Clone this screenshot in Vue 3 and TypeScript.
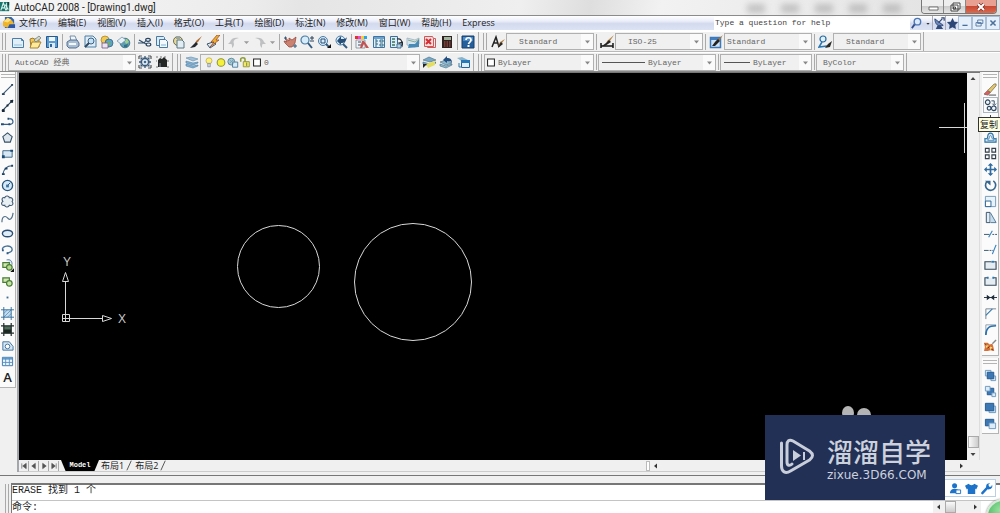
<script setup lang="ts">
import { ref } from 'vue'

interface Tool {
  icon: string
  label: string
}

const icons: Record<string, string> = {
  app: '<path d="M0 1h11v11H0z" fill="#18756e"/><path d="M1 11 4 2l3 9M2 8h4M8 2v9M6 4l4 6" stroke="#d9f2ec" stroke-width="1.3" fill="none"/><path d="M9 1h2v4H9z" fill="#0b3f3c"/>',
  doc: '<path d="M2 1h7l3 3v9H2z" fill="#2f66b8"/><path d="M0 6 5 2l5 3 2 4-6 4-6-2z" fill="#f0b429"/><path d="M5 2l4 2-4 3-4-1z" fill="#ffe07a"/><path d="M7 9h6v4H5z" fill="#2b57a6"/>',
  new: '<path d="M1.500 3.500h9l2 2v7h-11z" fill="#e3eff8" stroke="#4b7ea6"/><path d="M10.500 3.500v2h2" fill="none" stroke="#4b7ea6"/><path d="M3 9h8v2H3z" fill="#bcd6ea"/>',
  open: '<path d="M2 4 5 3l1 1h5v8H3z" fill="#efc75b" stroke="#a27b2a"/><path d="M4 7h9l-3 6H2z" fill="#ffe99a" stroke="#a88430"/><path d="M6 5 11 1l2 2-5 4z" fill="#cfd8d0" stroke="#64746b" stroke-width=".7"/>',
  save: '<path d="M1.500 1.500h11v11h-11z" fill="#5c9bd2" stroke="#235b91"/><path d="M4 2h6v4H4z" fill="#eef6fb"/><path d="M4 8h6v5H4z" fill="#dce9f3"/><path d="M5 9h2v3H5z" fill="#2f6499"/>',
  plot: '<path d="M4 1h5l2 5H5z" fill="#eef5fb" stroke="#5c7897" stroke-width=".8"/><path d="M1 7l3-2h7l2 3v3l-3 2H3l-2-2z" fill="#a8bdd2" stroke="#48688b" stroke-width=".9"/><path d="M3 8h7v2H3z" fill="#f4f8fb"/>',
  preview: '<path d="M2 1h8l3 3v8H2z" fill="#deedf7" stroke="#4b7ea6"/><circle cx="8" cy="6" r="3" fill="#c3e2f5" stroke="#426180"/><path d="M6 8 2 12" stroke="#314964" stroke-width="2"/>',
  publish: '<circle cx="5" cy="5" r="4" fill="#f3ca51" stroke="#a37a20" stroke-width=".7"/><circle cx="9" cy="8" r="4" fill="#5aa1c8" stroke="#285e80" stroke-width=".7"/><path d="M2 8h6v5H2z" fill="#ece3f1" stroke="#6f5684" stroke-width=".8"/><path d="M7 6l4 2-2 3z" fill="#73b15e"/>',
  globe: '<circle cx="8" cy="8" r="4.800" fill="#5f9db4" stroke="#2d6479" stroke-width=".8"/><path d="M7 5l3-1 2 3-3 2z" fill="#9cd187"/><path d="M7 10l4-1-1 3-3 0z" fill="#2f7187"/><path d="M0 6l5-4 4 3-5 4z" fill="#e6f0f7" stroke="#698ca5" stroke-width=".7"/>',
  cut: '<ellipse cx="10" cy="4.800" rx="2.300" ry="1.500" fill="none" stroke="#284461" stroke-width="1.200"/><ellipse cx="10.500" cy="9.500" rx="2.300" ry="1.500" fill="none" stroke="#284461" stroke-width="1.200"/><path d="M8 9 1 5M8 5.500 6 8H0" stroke="#34526e" stroke-width="1.200" fill="none"/>',
  copyclip: '<path d="M1.500 1.500h7l1 1v8h-8z" fill="#dcebf6" stroke="#4a7aa2"/><path d="M4.500 4.500h6l2 2v6h-8z" fill="#f3f9fd" stroke="#4a7aa2"/><path d="M6 9h5v2H6z" fill="#b8d4e9"/>',
  paste: '<circle cx="6" cy="6" r="4.500" fill="#e8d99b" stroke="#656f58"/><path d="M4 1h4v3H4z" fill="#9ba69f"/><path d="M5 5h5l2 2v6H5z" fill="#e1edf3" stroke="#587781"/>',
  match: '<path d="M13 1 9 7 6 9l1-3z" fill="#af6e35"/><path d="M7 7l2 2-3 3-5 1 3-3z" fill="#22282f"/>',
  block: '<path d="M1 9l6-2 3 2-6 4z" fill="#dce8f2" stroke="#3d566e"/><path d="M11 0 5 7h3L4 12l9-7h-3l4-5z" fill="#ecae2e" stroke="#963f20" stroke-width=".7"/>',
  undo: '<path d="M3 7C4 3 8 2 12 3 7 4 6 6 7 9c0 2-1 3-2 4 0-3 0-4-1-4H1z" fill="#bfc0c2"/>',
  redo: '<path d="M11 7C10 3 6 2 2 3c5 1 6 3 5 6 0 2 1 3 2 4 0-3 0-4 1-4h3z" fill="#bfc0c2"/>',
  tri: '<path d="M3 6h8L7 10z" fill="#9b9b9b"/>',
  pan: '<path d="M2 3l4 3V3l3 2 4-3-1 6-3 4H6L2 8l-1-2 3 1z" fill="#cc8271" stroke="#913f35" stroke-width=".7"/><path d="M1 3h3M2.500 1.500v3M10 11h4M12 9v4" stroke="#33597d"/>',
  zoomrt: '<circle cx="5" cy="5" r="4" fill="#d6ecfa" stroke="#4a7ba2" stroke-width="1.200"/><path d="M8 8l4 5" stroke="#325b82" stroke-width="2"/><path d="M10 3h4M12 1v4M10 6h4" stroke="#2e435a" fill="none"/>',
  zoomwin: '<circle cx="6" cy="6" r="4.500" fill="#d6ecfa" stroke="#4a7ba2"/><path d="M4 4h4v4H4z" fill="none" stroke="#284b70"/><path d="M9 9l3 3" stroke="#325b82" stroke-width="2"/><path d="M10 13h4v-4z" fill="#111"/>',
  zoomprev: '<circle cx="6.500" cy="5.500" r="4.500" fill="#d6ecfa" stroke="#4a7ba2"/><path d="M9 9l4 4" stroke="#325b82" stroke-width="2"/><path d="M3 6l4-5v3c3 0 5 0 6-2-1 5-3 6-6 6v2z" fill="#274e77"/>',
  props: '<path d="M0 1h3v3H0z" fill="#e62f2f"/><path d="M3 1h3v3H3z" fill="#ef45d3"/><path d="M6 1h3v3H6z" fill="#f3d321"/><path d="M9 1h3v3H9z" fill="#28a5e6"/><path d="M1 5h9v8H1z" fill="#eef3f7" stroke="#6c7b88" stroke-width=".7"/><path d="M3 7h3M3 10h3" stroke="#3c4d5f"/><path d="M7 6l2 0 3 4 2 3h-3L9 9l-2 4H5z" fill="#c55252"/>',
  design: '<path d="M1.500 1.500h11v11h-11z" fill="#e2eff8" stroke="#3d74a3"/><path d="M2 2h10v2H2z" fill="#6ba3d0"/><path d="M4 4v8M4 6h2M4 9h2M8 5h3v2H8zM8 9h3v2H8z" fill="none" stroke="#336a86"/>',
  palette: '<path d="M1.500 1.500h7v11h-7z" fill="#dcebf6" stroke="#3d6e99"/><path d="M3 4h3M3 7h3M3 10h3" stroke="#397458" stroke-width="1.500"/><path d="M8 4c4-1 5 2 5 5M10 8l3 3 1-4z" fill="none" stroke="#222d38" stroke-width="1.200"/><path d="M8 9h4v4H8z" fill="#b9d3e6" stroke="#47708f"/>',
  sheet: '<path d="M1 3l8 2 4-2v6l-4 3-8-2z" fill="#d4e5ef" stroke="#91a7b6" stroke-width=".7"/><path d="M3 9l6 0 4-5v8l-11 1z" fill="#478ab6"/><path d="M2 5l7 2 4-3" stroke="#86a98f" fill="none"/>',
  markup: '<path d="M1.500 1.500h8l1 2v8h-9z" fill="#f9dcdc" stroke="#cd5757"/><path d="M4.500 11.500v1h8v-9h-2" fill="none" stroke="#d35858"/><path d="M3 4l5 5M8 4 3 9" stroke="#d62d35" stroke-width="2"/>',
  calc: '<path d="M2 1h10v12H2z" fill="#2f211f"/><path d="M4 2h7v3H4z" fill="#9eb49c"/><path d="M4 7h7M4 9h7M4 11h7" stroke="#bd594f" stroke-width="1.200" stroke-dasharray="1.500 1"/>',
  help: '<path d="M1 1h12v12H1z" fill="#245e9b" stroke="#163f6c"/><path d="M2 2h10v4H2z" fill="#4b8bc5"/><path d="M5 5c0-3 5-3 5 0 0 2-2 2-2.500 4" stroke="#fff" stroke-width="1.700" fill="none"/><path d="M6.500 10h2v2h-2z" fill="#fff"/>',
  textstyle: '<path d="M1 12 5 2l3 10M2 8h5" fill="none" stroke="#222" stroke-width="1.500"/><path d="M14 4l-3 4-4 3 2-4z" fill="#b68145"/><path d="M10 7l2 2-5 4 1-3z" fill="#262626"/>',
  dimstyle: '<path d="M1 8v5M13 8v5M1 11h12" fill="none" stroke="#161616" stroke-width="1.500"/><path d="M14 0l-4 6-4 4 1-4z" fill="#b98b4e"/><path d="M9 5l2 2-6 4H2l4-3z" fill="#252525"/>',
  tablestyle: '<path d="M1.500 2.500h10v10h-10z" fill="#cfe2f4" stroke="#3e78b7" stroke-width="1.500"/><path d="M2 3h9v2H2z" fill="#3f80c5"/><path d="M14 0l-4 6-5 4 2-4z" fill="#aa753a"/><path d="M9 4l2 2-5 5H3l3-4z" fill="#222"/>',
  leader: '<circle cx="5" cy="4" r="3" fill="#dff0fa" stroke="#276aa0" stroke-width="1.200"/><path d="M4 7 1 12l8-1" stroke="#2c77b3" stroke-width="1.500" fill="none"/><path d="M14 6l-4 3-3 4 5-1z" fill="#2a2a26"/>',
  gear: '<path d="M1 1h3M10 1h3M1 13h3M10 13h3M1 1v3M13 1v3M1 10v3M13 10v3" stroke="#555" stroke-width="1.200"/><path d="M2 2h10v10H2z" fill="#aebccc"/><circle cx="7" cy="7" r="3.500" fill="#e6eff7" stroke="#3a5875" stroke-width="1.300"/><circle cx="7" cy="7" r="1.300" fill="#3e6b96"/><path d="M7 1v2M7 11v2M1 7h2M11 7h2M3 3l1 1M10 10l1 1M11 3l-1 1M4 10l-1 1" stroke="#3a5875" stroke-width="1.300"/>',
  workspace: '<path d="M1 2h2M5 2h2M9 2h2M1 12h2M12 12h2M1 6h1M12 6h2" stroke="#777"/><path d="M3 5l2-2 2 1 2-2 3 3v7H3z" fill="#242626"/><path d="M4 8h2v4H4z" fill="#555b60"/>',
  layers: '<path d="M1 3l5-1 7 2-5 2z" fill="#9fc0d8" stroke="#6f97b3" stroke-width=".7"/><path d="M1 6l7 2 5-1v1L8 10 1 8zM1 9l7 2 5-1v1l-5 2-7-2z" fill="#82b0d0" stroke="#4c81a8" stroke-width=".6"/>',
  bulb: '<circle cx="7" cy="5" r="3.500" fill="#fff279" stroke="#b5a14a" stroke-width=".8"/><path d="M5.500 8h3v4h-3z" fill="#ccd7e2" stroke="#6b7b8e" stroke-width=".7"/>',
  sun: '<circle cx="7" cy="7" r="4.500" fill="#f5f13b" stroke="#8c9137" stroke-width="1.200"/>',
  freeze: '<circle cx="5" cy="6" r="4" fill="#a8cad5" stroke="#517f92"/><path d="M6.500 6.500h6v6h-6z" fill="#d8ebf5" stroke="#417293"/><path d="M3 4l5 4M8 3 3 8" stroke="#759daf"/>',
  lock: '<path d="M2 6V3c0-2 5-2 5 0v3" fill="none" stroke="#8d9b35" stroke-width="1.800"/><path d="M5 6h7v6H5z" fill="#f2e86f" stroke="#8d8c30"/><path d="M9 7v4" stroke="#647b2b"/>',
  square: '<path d="M3 3h8v8H3z" fill="#fff" stroke="#222" stroke-width="1.200"/>',
  layercur: '<path d="M1 5l6-3 7 3-6 2zM1 7l7 2 6-2v1l-6 3-7-2z" fill="#79a8c4" stroke="#426c84" stroke-width=".6"/><path d="M4 9l9-3v4l-7 3z" fill="#e3dd60"/><path d="M1 13V9h4z" fill="#222"/>',
  layerprev: '<path d="M1 7l6-2 6 3-6 2zM1 9l6 2 6-2v1l-6 3-6-2z" fill="#8db8cd" stroke="#426c84" stroke-width=".6"/><path d="M4 5l4-4v2c3 0 5 1 5 5-1-2-2-2-5-2v2z" fill="#234e80"/>',
  layerstate: '<path d="M1 3l5-1 6 3-5 2z" fill="#89b4cd"/><path d="M5.500 5.500h8v7h-8z" fill="#deedf7" stroke="#236499"/><path d="M5 5h9v3H5z" fill="#2779b8"/><path d="M3 8v4h2" stroke="#3978a4" fill="none"/>',
  line: '<path d="M2 12 12 2" stroke="#3a5878" stroke-width="1.200"/><path d="M1 11h3v2H1zM11 1h2v2h-2z" fill="#29445e"/>',
  xline: '<path d="M1 13 13 1" stroke="#29445e" stroke-width="1.300"/><path d="M1 11h3v3H1zM10 1h3v3h-3zM6 6h2v2H6z" fill="#142638"/>',
  pline: '<path d="M2 10h8c4 0 4-6-1-6" stroke="#38618a" stroke-width="1.300" fill="none"/><path d="M0 9h3v2H0zM8 9h2v2H8zM7 3h2v2H7z" fill="#204d78"/>',
  polygon: '<path d="M7 2l5 4-2 6H4L2 6z" fill="#dce6ec" stroke="#354f66" stroke-width="1.200"/>',
  rect: '<path d="M2 4h10v7H2z" fill="#d7e7f3" stroke="#386386"/><path d="M1 9h3v3H1zM10 3h3v2h-3z" fill="#194a75"/>',
  arc: '<path d="M2 12C3 7 6 3 12 3" stroke="#315779" stroke-width="1.200" fill="none"/><path d="M1 11h3v2H1zM4 5h3v2H4zM11 2h2v2h-2z" fill="#1e4162"/>',
  circle: '<circle cx="7" cy="7" r="5.500" fill="#d5e9f7" stroke="#28577e" stroke-width="1.400"/><path d="M7 7l3-3" stroke="#204d72"/><path d="M5.500 6h3v3h-3z" fill="#3975a4"/>',
  cloud: '<path d="M4 3c1-3 5-2 5 0 4-1 4 3 3 4 2 3 0 5-3 4-1 3-5 2-5 0-4 1-4-3-2-4-2-3 0-5 2-4z" fill="#e9f0f4" stroke="#435b75" stroke-width="1.200"/>',
  spline: '<path d="M1 12C1 5 5 5 7 7.500s5 2 6-5.500" stroke="#526f89" stroke-width="1.300" fill="none"/>',
  ellipse: '<ellipse cx="7" cy="7" rx="5.500" ry="3.500" fill="#deedf7" stroke="#294d76" stroke-width="1.500"/>',
  ellarc: '<path d="M2 8C-1 3 12 1 12 7c0 3-3 3-5 4" fill="none" stroke="#4a7497" stroke-width="1.500"/><path d="M6 10h2v2H6zM1 7h2v2H1z" fill="#2c5a84"/>',
  insert: '<path d="M6 1c4-1 6 1 6 5" stroke="#547ea8" fill="#d9e9f4"/><path d="M2 4h7v5H2z" fill="#d2e6b2" stroke="#477d36" stroke-width="1.300"/><circle cx="9" cy="9" r="3" fill="#b9da8e" stroke="#477d36" stroke-width="1.300"/><path d="M10 14h4v-4z" fill="#111"/>',
  makeblock: '<path d="M2 3h7v5H2z" fill="#d2e6b2" stroke="#477d36" stroke-width="1.300"/><circle cx="9" cy="9" r="3" fill="#c6e3a3" stroke="#477d36" stroke-width="1.300"/>',
  point: '<path d="M6 6h2v2H6z" fill="#416b91"/>',
  hatch: '<path d="M3 3h8v8H3z" fill="#c4def0"/><path d="M3 7l4-4M3 11l8-8M7 11l4-4" stroke="#679ac1"/><path d="M0 3h14M3 0v14M11 0v14M0 11h14" stroke="#356d9b" fill="none"/>',
  gradient: '<path d="M3 3h8v8H3z" fill="#506c5b"/><path d="M3 7h8v4H3z" fill="#1b2520"/><path d="M0 3h14M3 0v14M11 0v14M0 11h14" stroke="#222d2b" stroke-width="1.300" fill="none"/>',
  region: '<path d="M2 3h7l4 5v4H2z" fill="#d6e7f4" stroke="#3d719e"/><circle cx="7" cy="8" r="2.500" fill="#fff" stroke="#3d719e"/>',
  table: '<path d="M1.500 2.500h11v9h-11z" fill="#eef6fb" stroke="#3975ac"/><path d="M2 3h10v2H2z" fill="#609cce"/><path d="M5 3v8M9 3v8M2 8h10" stroke="#5992c6"/>',
  erase: '<path d="M0 12l4-4 3 2-3 3z" fill="#d65f60" stroke="#7f3f3c" stroke-width=".7"/><path d="M4 8l7-7h2v2l-6 7z" fill="#e4c66a" stroke="#71674e" stroke-width=".8"/><path d="M5 13h8" stroke="#444"/>',
  copy: '<circle cx="4" cy="3.500" r="2.500" fill="#eef4f8" stroke="#2d4660" stroke-width="1.200"/><circle cx="5.500" cy="10" r="2" fill="#eef4f8" stroke="#2d4660" stroke-width="1.200"/><circle cx="10.500" cy="10" r="2.500" fill="#eef4f8" stroke="#2d4660" stroke-width="1.200"/><path d="M8 2h3v4M9 5l2 2 2-2" fill="none" stroke="#2d4660"/>',
  mirror: '<path d="M5 3v9H1zM9 3v9h4z" fill="#d3e5f2" stroke="#3b6285"/><path d="M7 0v13" stroke="#333"/>',
  offset: '<path d="M1 12h12V8c-3 1-3-1-3-2 0-5-6-5-6 0 0 1 0 3-3 2z" fill="#d4e8f7" stroke="#2c6f9f" stroke-width="1.200"/><path d="M4 10h7V9C7 9 9 5 7 5S7 9 4 9z" fill="#fff" stroke="#4b87b3"/>',
  array: '<path d="M1.500 1.500h4v4h-4zM8.500 1.500h4v4h-4zM1.500 8.500h4v4h-4zM8.500 8.500h4v4h-4z" fill="#f6f7f8" stroke="#333e49" stroke-width="1.200"/>',
  move: '<path d="M7 1v12M1 7h12" stroke="#326b9d" stroke-width="1.800"/><path d="M7 0l3 3H4zM7 14l3-3H4zM0 7l3-3v6zM14 7l-3-3v6z" fill="#326b9d"/>',
  rotate: '<path d="M3 3a5.500 5.500 0 1 0 7-1" fill="none" stroke="#376790" stroke-width="1.800"/><path d="M1 2h6v5z" fill="#376790"/>',
  scale: '<path d="M1.500 1.500h11v11h-11z" fill="#e8f2f8" stroke="#7098b8"/><path d="M1.500 6.500h6v6h-6z" fill="#fff" stroke="#235f91"/>',
  stretch: '<path d="M2.500 1.500h4v11h-4z" fill="#e3edf4" stroke="#344e68"/><path d="M7 2l6 10.500H7" fill="#c5dded" stroke="#4d7797"/>',
  trim: '<path d="M0 8h6M9 8h2M12 8h2" stroke="#33536e"/><path d="M5 11l4-7" stroke="#3d84bc" stroke-width="1.200"/>',
  extend: '<path d="M0 8h5M6 8h2M9 8h1" stroke="#33536e"/><path d="M9 12l4-10" stroke="#3d84bc" stroke-width="1.300"/>',
  breakpt: '<path d="M8 3H1v8h12V3h-2" fill="#e5edf2" stroke="#354757" stroke-width="1.200"/><path d="M8 2h3v2H8z" fill="#2c79b3"/>',
  break: '<path d="M4 3H1v8h12V3h-3" fill="#e5edf2" stroke="#354757" stroke-width="1.200"/><path d="M3 2h2v2H3zM9 2h2v2H9z" fill="#2c79b3"/>',
  join: '<path d="M0 7h14" stroke="#1f2d3b"/><path d="M3 4l4 3-4 3zM11 4 7 7l4 3z" fill="#1f2d3b"/>',
  chamfer: '<path d="M2 13V2h11" fill="none" stroke="#74818e"/><path d="M2 9l7-7" stroke="#347aaf" stroke-width="1.200"/>',
  fillet: '<path d="M2 13V2h11" fill="none" stroke="#8a99a7"/><path d="M2 13C2 6 5 3 13 3" fill="none" stroke="#2b72ad" stroke-width="1.800"/>',
  explode: '<path d="M0 4h4l2 2 3-1 1 3 1 5-4-1-3 1H0l1-4z" fill="#d4703a"/><path d="M2 6l3 1-3 3zM6 8l3 1-2 3z" fill="#f8dc70"/><path d="M1 5l2 2M8 11l2 1M4 10l2-2" stroke="#7a2b17"/><path d="M9 5l4-4" stroke="#888" stroke-width="1.500"/>',
  front: '<path d="M1.500 1.500h6v6h-6zM7.500 7.500h5v5h-5z" fill="#dcebf7" stroke="#6c98be"/><path d="M3.500 3.500h7v7h-7z" fill="#3d78b4" stroke="#22588e"/>',
  back: '<path d="M3.500 3.500h7v7h-7z" fill="#3d78b4" stroke="#22588e"/><path d="M1.500 1.500h5v5h-5zM8.500 8.500h4v4h-4z" fill="#dcebf7" stroke="#6c98be"/>',
  above: '<path d="M5.500 5.500h7v7h-7z" fill="#c6dff2" stroke="#6c98be"/><path d="M1.500 2.500h9v8h-9z" fill="#3d78b4" stroke="#22588e"/>',
  under: '<path d="M1.500 2.500h9v7h-9z" fill="#3d78b4" stroke="#22588e"/><path d="M5.500 6.500h7v6h-7z" fill="#dcebf7" stroke="#6c98be"/>',
  find: '<circle cx="8" cy="5" r="3.500" fill="#dceafb" stroke="#4d76b5" stroke-width="1.500"/><path d="M5 8l-3 4" stroke="#334f8c" stroke-width="2"/>',
  comm: '<path d="M2 2c0 6 4 9 9 7z" fill="#6f88b8" stroke="#2d4677"/><path d="M6 6l4-4M9 1h3v3" stroke="#2d4677" stroke-width="1.300" fill="none"/><path d="M3 13h8l-3-4H5z" fill="#354d7c"/>',
  star: '<path d="M7 1l2 4 4 .5-3 3 .7 4.500L7 11l-3.700 2 .7-4.500-3-3L5 5z" fill="#2c4775"/>',
  minimize: '<path d="M4 9h6v1.500H4z" fill="#4b6f9b"/>',
  restore: '<path d="M5.500 3.500h6v4h-6zM3.500 6.500h6v4h-6z" fill="#e7f2fd" stroke="#4b6f9b"/>',
  close: '<path d="M4 4l6 6M10 4l-6 6" stroke="#4b6f9b" stroke-width="1.800"/>',
}

const standardGroups: Tool[][] = [
  [
    { icon: 'new', label: '新建' },
    { icon: 'open', label: '打开' },
    { icon: 'save', label: '保存' },
  ],
  [
    { icon: 'plot', label: '打印' },
    { icon: 'preview', label: '打印预览' },
    { icon: 'publish', label: '发布' },
    { icon: 'globe', label: '三维 DWF' },
  ],
  [
    { icon: 'cut', label: '剪切' },
    { icon: 'copyclip', label: '复制到剪贴板' },
    { icon: 'paste', label: '粘贴' },
    { icon: 'match', label: '特性匹配' },
    { icon: 'block', label: '块编辑器' },
  ],
  [
    { icon: 'undo', label: '放弃' },
    { icon: 'tri', label: '放弃列表' },
    { icon: 'redo', label: '重做' },
    { icon: 'tri', label: '重做列表' },
  ],
  [
    { icon: 'pan', label: '实时平移' },
    { icon: 'zoomrt', label: '实时缩放' },
    { icon: 'zoomwin', label: '窗口缩放' },
    { icon: 'zoomprev', label: '缩放上一个' },
  ],
  [
    { icon: 'props', label: '特性' },
    { icon: 'design', label: '设计中心' },
    { icon: 'palette', label: '工具选项板' },
    { icon: 'sheet', label: '图纸集管理器' },
    { icon: 'markup', label: '标记集管理器' },
    { icon: 'calc', label: '快速计算器' },
  ],
  [{ icon: 'help', label: '帮助' }],
]

const styleCombos = [
  { icon: 'textstyle', label: '文字样式', value: 'Standard', indent: 'wide' },
  { icon: 'dimstyle', label: '标注样式', value: 'ISO-25', indent: 'wide' },
  { icon: 'tablestyle', label: '表格样式', value: 'Standard', indent: 'narrow' },
  { icon: 'leader', label: '多重引线样式', value: 'Standard', indent: 'wide' },
]

const menus = ['文件(F)', '编辑(E)', '视图(V)', '插入(I)', '格式(O)', '工具(T)', '绘图(D)', '标注(N)', '修改(M)', '窗口(W)', '帮助(H)', 'Express']

const toTools = (pairs: [string, string][]): Tool[] => pairs.map(([icon, label]) => ({ icon, label }))

const drawTools = toTools([
  ['line', '直线'], ['xline', '构造线'], ['pline', '多段线'], ['polygon', '正多边形'], ['rect', '矩形'],
  ['arc', '圆弧'], ['circle', '圆'], ['cloud', '修订云线'], ['spline', '样条曲线'], ['ellipse', '椭圆'],
  ['ellarc', '椭圆弧'], ['insert', '插入块'], ['makeblock', '创建块'], ['point', '点'], ['hatch', '图案填充'],
  ['gradient', '渐变色'], ['region', '面域'], ['table', '表格'], ['letter', '多行文字'],
])

const modifyTools = toTools([
  ['erase', '删除'], ['copy', '复制'], ['mirror', '镜像'], ['offset', '偏移'], ['array', '阵列'],
  ['move', '移动'], ['rotate', '旋转'], ['scale', '缩放'], ['stretch', '拉伸'], ['trim', '修剪'],
  ['extend', '延伸'], ['breakpt', '打断于点'], ['break', '打断'], ['join', '合并'], ['chamfer', '倒角'],
  ['fillet', '圆角'], ['explode', '分解'],
])

const orderTools = toTools([
  ['front', '前置'], ['back', '后置'], ['above', '置于对象之上'], ['under', '置于对象之下'],
])

const layerStates = ['bulb', 'sun', 'freeze', 'lock', 'square']
const question = ref('Type a question for help')
const command = ref('命令:')
const activeTab = ref('Model')
const navArrows = [
  { label: '第一个', d: 'M2 1v6M7 1v6L3 4z' },
  { label: '上一个', d: 'M6 1v6L2 4z' },
  { label: '下一个', d: 'M3 1v6l4-3z' },
  { label: '最后一个', d: 'M7 1v6M2 1v6l4-3z' },
]
</script>

<template>
  <div class="window">
    <header class="titlebar">
      <svg class="logo" viewBox="0 0 12 14" v-html="icons.app"></svg>
      <h1>AutoCAD 2008 - [Drawing1.dwg]</h1>
      <div class="glass" aria-hidden="true"><i v-for="n in 5" :key="n"></i></div>
      <div class="winbtns">
        <button aria-label="最小化"><svg viewBox="0 0 20 12"><path d="M6 6h9v3H6z" fill="#fff" stroke="#555" stroke-width=".8" /></svg></button>
        <button aria-label="还原"><svg viewBox="0 0 20 12"><path d="M8 2h7v6H8zM6 4h7v6H6z" fill="#fff" stroke="#444" /><path d="M8.500 6h2v2h-2z" fill="none" stroke="#444" /></svg></button>
        <button class="close" aria-label="关闭"><svg viewBox="0 0 20 12"><path d="M7 3l6 6M13 3l-6 6" stroke="#7a3128" stroke-width="3.500" /><path d="M7 3l6 6M13 3l-6 6" stroke="#fff" stroke-width="2" /></svg></button>
      </div>
    </header>

    <div class="menubar">
      <svg class="docicon" viewBox="0 0 14 14" v-html="icons.doc"></svg>
      <nav>
        <button v-for="m in menus" :key="m">{{ m }}</button>
      </nav>
      <input v-model="question" class="ask" type="text" aria-label="帮助问题" />
      <button class="info" aria-label="搜索"><svg viewBox="0 0 14 14" v-html="icons.find"></svg></button>
      <button class="info slim" aria-label="搜索选项"><svg viewBox="0 0 14 14"><path d="M4 6h6L7 9z" fill="#333" /></svg></button>
      <button class="info boxed" aria-label="通讯中心"><svg viewBox="0 0 14 14" v-html="icons.comm"></svg></button>
      <button class="info boxed" aria-label="收藏夹"><svg viewBox="0 0 14 14" v-html="icons.star"></svg></button>
      <button class="info mdi" aria-label="最小化图形"><svg viewBox="0 0 14 14" v-html="icons.minimize"></svg></button>
      <button class="info mdi" aria-label="还原图形"><svg viewBox="0 0 14 14" v-html="icons.restore"></svg></button>
      <button class="info mdi" aria-label="关闭图形"><svg viewBox="0 0 14 14" v-html="icons.close"></svg></button>
    </div>

    <div class="toolrow">
      <div class="bar">
        <span class="grip"></span>
        <template v-for="(group, gi) in standardGroups" :key="gi">
          <span v-if="gi" class="sep"></span>
          <button v-for="(t, ti) in group" :key="ti" class="tool" :class="{ drop: t.icon === 'tri' }" :aria-label="t.label">
            <svg viewBox="0 0 14 14" v-html="icons[t.icon]"></svg>
          </button>
        </template>
      </div>
      <div class="bar styles">
        <span class="grip"></span>
        <template v-for="(c, ci) in styleCombos" :key="c.label">
          <span v-if="ci" class="sep"></span>
          <button class="tool" :aria-label="c.label"><svg viewBox="0 0 14 14" v-html="icons[c.icon]"></svg></button>
          <span class="combo style" :class="c.indent">
            <select :aria-label="c.label"><option>{{ c.value }}</option></select>
            <svg class="arrow" viewBox="0 0 12 14"><path d="M4 6h5L6.500 9z" fill="#888" /></svg>
          </span>
        </template>
      </div>
    </div>

    <div class="toolrow second">
      <div class="bar workspaces">
        <span class="grip"></span>
        <span class="combo ws">
          <select aria-label="工作空间"><option>AutoCAD 经典</option></select>
          <svg class="arrow" viewBox="0 0 12 14"><path d="M4 6h5L6.500 9z" fill="#888" /></svg>
        </span>
        <button class="tool" aria-label="工作空间设置"><svg viewBox="0 0 14 14" v-html="icons.gear"></svg></button>
        <button class="tool" aria-label="我的工作空间"><svg viewBox="0 0 14 14" v-html="icons.workspace"></svg></button>
      </div>
      <div class="bar layerbar">
        <span class="grip"></span>
        <button class="tool" aria-label="图层特性管理器"><svg viewBox="0 0 14 14" v-html="icons.layers"></svg></button>
        <span class="combo layer">
          <svg v-for="s in layerStates" :key="s" class="state" viewBox="0 0 14 14" v-html="icons[s]"></svg>
          <select aria-label="图层"><option>0</option></select>
          <svg class="arrow" viewBox="0 0 12 14"><path d="M4 6h5L6.500 9z" fill="#888" /></svg>
        </span>
        <button class="tool" aria-label="置为当前图层"><svg viewBox="0 0 14 14" v-html="icons.layercur"></svg></button>
        <button class="tool" aria-label="上一个图层"><svg viewBox="0 0 14 14" v-html="icons.layerprev"></svg></button>
        <button class="tool" aria-label="图层状态"><svg viewBox="0 0 14 14" v-html="icons.layerstate"></svg></button>
      </div>
      <div class="bar propbar">
        <span class="grip"></span>
        <span class="combo color">
          <svg class="state" viewBox="0 0 14 14" v-html="icons.square"></svg>
          <select aria-label="颜色"><option>ByLayer</option></select>
          <svg class="arrow" viewBox="0 0 12 14"><path d="M4 6h5L6.500 9z" fill="#888" /></svg>
        </span>
        <span class="sep"></span>
        <span class="combo ltype">
          <i class="sample"></i>
          <select aria-label="线型"><option>ByLayer</option></select>
          <svg class="arrow" viewBox="0 0 12 14"><path d="M4 6h5L6.500 9z" fill="#888" /></svg>
        </span>
        <span class="sep"></span>
        <span class="combo lweight">
          <i class="sample"></i>
          <select aria-label="线宽"><option>ByLayer</option></select>
          <svg class="arrow" viewBox="0 0 12 14"><path d="M4 6h5L6.500 9z" fill="#888" /></svg>
        </span>
        <span class="sep"></span>
        <span class="combo plot">
          <select aria-label="打印样式"><option>ByColor</option></select>
          <svg class="arrow" viewBox="0 0 12 14"><path d="M4 6h5L6.500 9z" fill="#888" /></svg>
        </span>
      </div>
    </div>

    <main class="work">
      <aside class="side left">
        <div class="dock">
          <span class="vgrip"></span>
          <button v-for="t in drawTools" :key="t.label" class="vtool" :aria-label="t.label">
            <b v-if="t.icon === 'letter'">A</b>
            <svg v-else viewBox="0 0 14 14" v-html="icons[t.icon]"></svg>
          </button>
        </div>
      </aside>

      <section class="document">
        <div class="viewrow">
          <svg class="canvas" role="img" aria-label="模型空间">
            <g fill="none" stroke="#d8d8d8">
              <circle cx="259.500" cy="193.500" r="41" />
              <circle cx="394" cy="209" r="58.500" />
              <path d="M43.500 241.500h7v7h-7zM43.500 245.500h40M46.500 249v-41M43.500 208.500h6l-3-9zM83.500 242.500v6l9-3z" />
              <path d="M920 54.500h28M945.500 30v50" />
            </g>
            <text x="44" y="193">Y</text>
            <text x="99" y="250">X</text>
            <ellipse cx="829" cy="340" rx="6" ry="7" fill="#b5b5b5" />
            <ellipse cx="845" cy="342" rx="7" ry="7" fill="#b5b5b5" />
          </svg>
          <div class="vscroll">
            <button aria-label="向上滚动"><svg viewBox="0 0 12 12"><path d="M3.500 7h5L6 4z" fill="#444" /></svg></button>
            <span class="vthumb"></span>
            <button aria-label="向下滚动"><svg viewBox="0 0 12 12"><path d="M3.500 5h5L6 8z" fill="#444" /></svg></button>
          </div>
        </div>
        <div class="tabrow">
          <button v-for="a in navArrows" :key="a.label" class="nav" :aria-label="a.label">
            <svg viewBox="0 0 9 8"><path :d="a.d" fill="#555" stroke="#555" stroke-width=".7" /></svg>
          </button>
          <button class="tab model" :class="{ active: activeTab === 'Model' }" @click="activeTab = 'Model'">Model</button>
          <button class="tab" @click="activeTab = '布局1'">布局1</button>
          <svg class="slash" viewBox="0 0 8 11"><path d="M1 11 6 0" stroke="#444" /></svg>
          <button class="tab" @click="activeTab = '布局2'">布局2</button>
          <svg class="slash" viewBox="0 0 8 11"><path d="M1 11 6 0" stroke="#444" /></svg>
          <div class="hscroll">
            <span class="split"></span>
            <button aria-label="向左滚动"><svg viewBox="0 0 12 12"><path d="M7 3.500v5L4 6z" fill="#333" /></svg></button>
            <span class="fill"></span>
            <button aria-label="向右滚动"><svg viewBox="0 0 12 12"><path d="M5 3.500v5L8 6z" fill="#333" /></svg></button>
          </div>
        </div>
      </section>

      <aside class="side right">
        <div class="dock">
          <span class="vgrip"></span>
          <button v-for="t in modifyTools" :key="t.label" class="vtool" :class="{ hover: t.icon === 'copy' }" :aria-label="t.label">
            <svg viewBox="0 0 14 14" v-html="icons[t.icon]"></svg>
            <span v-if="t.icon === 'copy'" class="tip" role="tooltip">复制</span>
          </button>
        </div>
        <div class="dock order">
          <span class="vgrip"></span>
          <button v-for="t in orderTools" :key="t.label" class="vtool" :aria-label="t.label">
            <svg viewBox="0 0 14 14" v-html="icons[t.icon]"></svg>
          </button>
        </div>
      </aside>
    </main>

    <footer class="command">
      <span class="grip"></span>
      <div class="console">
        <p class="history">ERASE 找到 1 个</p>
        <div class="promptrow">
          <input v-model="command" type="text" aria-label="命令行" />
          <div class="cscroll">
            <button aria-label="向左"><svg viewBox="0 0 12 12"><path d="M7 3.500v5L4 6z" fill="#333" /></svg></button>
            <span class="cthumb"></span>
            <span class="fill"></span>
            <button aria-label="向右"><svg viewBox="0 0 12 12"><path d="M5 3.500v5L8 6z" fill="#333" /></svg></button>
          </div>
        </div>
      </div>
    </footer>

    <div class="brand">
      <svg class="play" viewBox="0 0 36 38">
        <path d="M2.500 6v23c0 6 4 8 9 5l19-11c4-3 4-6 0-9L14 4C10 2 8 4 8 8v17c0 4 3 4 5 2" fill="none" stroke="#c9cedb" stroke-width="3" stroke-linecap="round" stroke-linejoin="round" />
        <path d="M14 13v11l8-5.500zM24 15h2v8h-2z" fill="#c9cedb" />
      </svg>
      <div>
        <strong>溜溜自学</strong>
        <span>zixue.3D66.COM</span>
      </div>
    </div>

    <div class="tray">
      <button aria-label="账户"><svg viewBox="0 0 14 14"><circle cx="6" cy="4" r="2.700" fill="#1c73c9" /><path d="M1 12c0-6 9-6 10-2v2z" fill="#1c73c9" /><path d="M7.500 8.500h5v4h-5z" fill="#fff" stroke="#1c73c9" /></svg></button>
      <button aria-label="皮肤"><svg viewBox="0 0 14 14"><path d="M4 2c1 2 5 2 6 0l4 2-2 4-1-1v6H3V7L2 8 0 4z" fill="#1c73c9" /></svg></button>
      <button aria-label="设置"><svg viewBox="0 0 14 14"><path d="M2.500 12 8 6" stroke="#1c73c9" stroke-width="2.600" stroke-linecap="round" /><path d="M11 1 9 3l1 2 2 0 1-2c1 3-1 5-4 5S6 3 8 2z" fill="#1c73c9" /></svg></button>
    </div>
    <div class="orb" aria-hidden="true"></div>
  </div>
</template>

<style>
html,
body {
  height: 100%;
  margin: 0;
  overflow: hidden;
}

#app {
  height: 100%;
}
</style>

<style scoped>
.window {
  position: relative;
  display: flex;
  flex-direction: column;
  height: 100%;
  overflow: hidden;
  background: #f0f0f0;
  color: #333;
  font: 9px/14px "Open Sans", "Noto Sans CJK SC", sans-serif;
}

button {
  display: flex;
  flex: none;
  align-items: center;
  justify-content: center;
  margin: 0;
  padding: 0;
  border: 0;
  background: none;
  color: inherit;
  font: inherit;
}

svg {
  display: block;
  flex: none;
}

.titlebar {
  display: flex;
  flex: none;
  height: 15px;
  background: linear-gradient(100deg, #f6f6f6 0%, #ececec 25%, #e5e5e5 30%, #efefef 52%, #dedede 59%, #f2f2f2 66%, #e0e0e0 100%);
}

.logo {
  width: 10px;
  height: 14px;
}

h1 {
  flex: 1;
  margin: 0 0 0 4px;
  color: #222;
  font: 400 10px/15px Roboto, sans-serif;
  white-space: nowrap;
}

.glass {
  display: flex;
  gap: 16px;
  margin: 4px 20px 0 0;
}

.glass i {
  width: 18px;
  height: 9px;
  background: #999;
  opacity: 0.5;
  filter: blur(3px);
}

.winbtns {
  display: flex;
  width: 74px;
  height: 13px;
  margin-right: 3px;
  overflow: hidden;
  border: 1px solid #777;
  border-top: 0;
  border-radius: 0 0 4px 4px;
}

.winbtns button {
  flex: 1;
  border-right: 1px solid #888;
  background: linear-gradient(#eee 0 45%, #ccc 50%, #e6e6e6);
}

.winbtns .close {
  flex: 1.4;
  border: 0;
  background: linear-gradient(#e7a092 0 45%, #c94a34 50%, #d96a50);
}

.winbtns svg {
  width: 20px;
  height: 12px;
}

.menubar {
  display: flex;
  flex: none;
  height: 14px;
  border-top: 1px solid #8b8b8b;
  border-bottom: 1px solid #fff;
  background: linear-gradient(#fff 0, #eceffa 35%, #d3daed 55%, #dce3f5);
}

.docicon {
  width: 13px;
  height: 13px;
  margin-left: 3px;
}

nav {
  display: flex;
  flex: 1;
  gap: 11px;
  padding-left: 3px;
  color: #222;
}

.ask {
  box-sizing: border-box;
  width: 196px;
  height: 14px;
  padding: 0 1px;
  border: 0;
  background: #fff;
  color: #444;
  font: 8px/14px "Liberation Mono", monospace;
}

.info {
  width: 13px;
}

.info svg {
  width: 13px;
  height: 13px;
}

.slim {
  width: 9px;
}

.slim svg {
  width: 8px;
}

.boxed {
  border-left: 1px solid #aab;
}

.mdi {
  width: 14px;
  box-sizing: border-box;
  border: 1px solid #a9bdd6;
  background: #e4effa;
}

.mdi svg {
  width: 12px;
  height: 12px;
}

.toolrow {
  display: flex;
  flex: none;
  height: 19px;
  border-bottom: 1px solid #b9b9b9;
  border-top: 1px solid #fff;
  background: #f0f0f0;
}

.second {
  height: 18px;
  border-bottom-color: #8a8a8a;
}

.bar {
  display: flex;
  flex: none;
  align-items: center;
  padding-right: 2px;
  border-right: 1px solid #aaa;
}

.grip {
  flex: none;
  width: 2px;
  height: 17px;
  margin: 0 3px 0 2px;
  border: solid #a9a9a9;
  border-width: 0 1px;
}

.styles .grip,
.propbar .grip,
.layerbar .grip {
  margin: 0 2px 0 4px;
}

.workspaces .grip {
  margin-right: 2px;
}

.sep {
  flex: none;
  width: 1px;
  height: 16px;
  margin: 0 1px 0 2px;
  background: #aaa;
}

.tool {
  width: 17px;
  height: 17px;
}

.tool svg {
  width: 14px;
  height: 14px;
}

.drop {
  width: 9px;
}

.drop svg {
  width: 9px;
}

.combo {
  display: flex;
  box-sizing: border-box;
  flex: none;
  align-items: center;
  height: 17px;
  border: 1px solid #b0b0b0;
  background: #f0f0f0;
}

.combo select {
  flex: 1;
  min-width: 0;
  height: 15px;
  margin: 0;
  padding: 0 0 0 6px;
  border: 0;
  border-radius: 0;
  background: none;
  color: #666;
  font: 8px/15px "Liberation Mono", "Noto Sans CJK SC", monospace;
  appearance: none;
}

.combo .arrow {
  width: 12px;
  height: 15px;
  background: #fafafa;
  pointer-events: none;
}

.style {
  width: 88px;
}

.style.wide select {
  padding-left: 12px;
}

.style.narrow select {
  padding-left: 2px;
}

.ws {
  width: 128px;
}

.layer {
  width: 220px;
  padding-left: 2px;
}

.state {
  width: 12px;
  height: 13px;
}

.layer select {
  padding-left: 1px;
}

.color {
  width: 110px;
}

.color select {
  padding-left: 1px;
}

.ltype {
  width: 118px;
}

.lweight {
  width: 92px;
}

.plot {
  width: 88px;
}

.sample {
  width: 43px;
  height: 1px;
  margin-left: 3px;
  background: #555;
}

.lweight .sample {
  width: 26px;
}

.combo .sample + select {
  padding-left: 3px;
}

.work {
  display: flex;
  flex: 1;
  min-height: 0;
}

.side {
  flex: none;
}

.left {
  width: 17px;
  border-right: 2px solid #a3a7ab;
}

.right {
  box-sizing: border-box;
  width: 20px;
  padding-left: 2px;
}

.dock {
  display: flex;
  flex-direction: column;
  align-items: center;
  padding: 1px 0 2px;
  border-right: 1px solid #b4b4b4;
  border-bottom: 1px solid #b4b4b4;
  background: #fbfbfb;
}

.left .dock {
  width: 15px;
}

.right .dock {
  width: 16px;
}

.order {
  margin-top: 2px;
}

.vgrip {
  width: 14px;
  height: 2px;
  margin: 1px 0 3px;
  border: solid #b4b4b4;
  border-width: 1px 0;
}

.vtool {
  position: relative;
  width: 15px;
  height: 16px;
}

.vtool svg {
  width: 13px;
  height: 13px;
}

.vtool b {
  color: #222;
  font: 600 13px/16px "Open Sans", sans-serif;
}

.hover {
  box-shadow: inset 0 0 0 1px #aeb6bf;
  z-index: 2;
}

.tip {
  position: absolute;
  top: 20px;
  right: -3px;
  box-sizing: border-box;
  width: 23px;
  height: 15px;
  border: 1px solid #333;
  background: #ffffe1;
  color: #222;
  font: 9px/13px "Noto Sans CJK SC", sans-serif;
  text-align: center;
  white-space: nowrap;
}

.document {
  display: flex;
  flex: 1;
  flex-direction: column;
  min-width: 0;
}

.viewrow {
  display: flex;
  flex: 1;
  min-height: 0;
  border-top: 1px solid #777;
}

.canvas {
  flex: 1;
  min-width: 0;
  height: 100%;
  background: #000;
}

.canvas text {
  fill: #c8c8c8;
  font: 12px "Liberation Sans", sans-serif;
}

.vscroll {
  display: flex;
  flex-direction: column;
  align-items: center;
  width: 12px;
  border-right: 1px solid #ddd;
  background: #f1f1f1;
}

.vscroll button {
  width: 12px;
  height: 12px;
}

.vscroll svg,
.hscroll svg,
.cscroll svg {
  width: 12px;
  height: 12px;
}

.vthumb {
  width: 9px;
  height: 10px;
  margin-top: auto;
  border: 1px solid #aaa;
  background: linear-gradient(90deg, #fafafa, #ccc);
}

.tabrow {
  display: flex;
  flex: none;
  align-items: center;
  height: 11px;
  border-bottom: 1px solid #ccc;
  background: #f0f0f0;
}

.nav {
  box-sizing: border-box;
  width: 10px;
  height: 10px;
  border-right: 1px solid #aaa;
}

.nav svg {
  width: 8px;
  height: 8px;
}

.tab {
  padding: 0 2px;
  color: #222;
  line-height: 11px;
}

.model {
  box-sizing: border-box;
  width: 38px;
  height: 11px;
  margin: 0 0 0 2px;
  padding: 0;
  font: bold 7px/11px "Liberation Mono", monospace;
}

.model.active {
  background: #000;
  color: #fff;
  clip-path: polygon(0 0, 100% 0, 88% 100%, 12% 100%);
}

.slash {
  width: 7px;
  height: 11px;
}

.hscroll {
  display: flex;
  align-items: center;
  width: 321px;
  margin: 0 13px 0 auto;
}

.split {
  box-sizing: border-box;
  width: 4px;
  height: 10px;
  border: 1px solid #bbb;
  background: #fff;
}

.fill {
  flex: 1;
}

.command {
  display: flex;
  flex: none;
  box-sizing: border-box;
  height: 38px;
  margin-top: 3px;
  padding-top: 7px;
  border-top: 1px solid #777;
}

.command .grip {
  height: 30px;
  margin: 1px 2px 0 5px;
}

.console {
  flex: 1;
  min-width: 0;
  border-top: 2px solid #777;
  border-left: 1px solid #777;
  background: #fff;
}

.history {
  margin: 0;
  height: 15px;
  border-bottom: 1px solid #c4c4c4;
  color: #222;
  font: 10px/12px "Liberation Mono", "Noto Sans CJK SC", monospace;
}

.promptrow {
  display: flex;
  height: 12px;
}

.promptrow input {
  flex: 1;
  min-width: 0;
  height: 14px;
  padding: 0;
  border: 0;
  background: none;
  color: #222;
  font: 10px/14px "Liberation Mono", "Noto Sans CJK SC", monospace;
}

.cscroll {
  display: flex;
  align-items: center;
  width: 48px;
  margin-right: 19px;
  background: #f0f0f0;
}

.cthumb {
  width: 9px;
  height: 10px;
  border: 1px solid #aaa;
  background: linear-gradient(#fafafa, #ccc);
}

.brand {
  position: absolute;
  right: 55px;
  bottom: 13px;
  display: flex;
  align-items: center;
  box-sizing: border-box;
  width: 180px;
  height: 85px;
  gap: 12px;
  padding: 0 0 4px 14px;
  background: #223056;
  color: #ccd1dc;
}

.play {
  width: 36px;
  height: 38px;
}

.brand strong {
  display: block;
  font: 500 26px/38px "Noto Sans CJK SC", sans-serif;
}

.brand span {
  display: block;
  font: 12px/10px "DejaVu Sans", sans-serif;
}

.tray {
  position: absolute;
  right: 4px;
  bottom: 16px;
  display: flex;
  box-sizing: border-box;
  width: 51px;
  height: 18px;
  padding: 0 2px 0 4px;
  justify-content: space-between;
  border: 1px solid #b9cfe6;
  border-left: 0;
  background: #fff;
}

.tray svg {
  width: 13px;
  height: 13px;
}

.orb {
  position: absolute;
  right: -20px;
  bottom: -20px;
  box-sizing: border-box;
  width: 34px;
  height: 34px;
  border: 2px solid #d6e9d8;
  border-radius: 50%;
  background: radial-gradient(circle at 40% 30%, #9be0a0, #3db55a 60%);
  box-shadow: 0 0 2px #666;
}
</style>
